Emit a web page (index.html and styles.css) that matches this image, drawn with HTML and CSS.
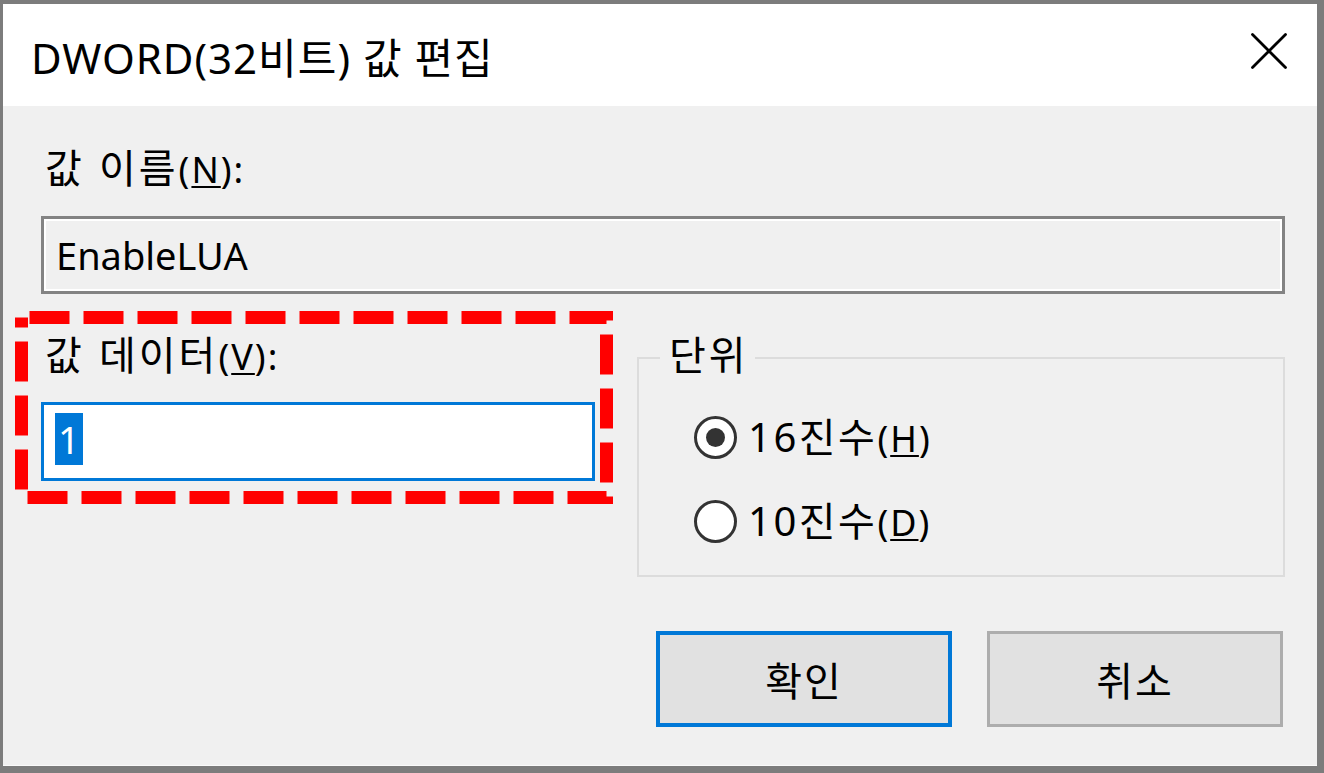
FILE: index.html
```html
<!DOCTYPE html>
<html lang="ko">
<head>
  <meta charset="UTF-8">
  <meta name="viewport" content="width=device-width, initial-scale=1.0">
  <title>DWORD(32비트) 값 편집</title>
  <link rel="stylesheet" href="styles.css">
</head>
<body>
  <div class="dialog">
    <header class="title-bar">
      <h1 class="title">DWORD(32비트) 값 편집</h1>
      <button class="close-button" aria-label="닫기">
        <svg width="36" height="36" viewBox="0 0 36 36">
          <path d="M1.5 1.5 L34.5 34.5 M34.5 1.5 L1.5 34.5" stroke="#000" stroke-width="2.8" fill="none" stroke-linecap="round"/>
        </svg>
      </button>
    </header>

    <main class="dialog-body">
      <label class="field-label" for="valueName">값 이름<span class="key">(<u>N</u>):</span></label>
      <div class="text-box text-box-readonly" id="valueName">EnableLUA</div>

      <div class="value-row">
        <div class="value-data">
          <!-- 강조 표시용 빨간 점선 박스 -->
          <svg class="highlight-box" width="598" height="193" viewBox="0 0 598 193">
            <rect x="6.5" y="6.5" width="585" height="180" fill="none" stroke="#ff0000" stroke-width="13" stroke-dasharray="40 14" stroke-dashoffset="-8"/>
          </svg>
          <label class="field-label" for="valueData">값 데이터<span class="key">(<u>V</u>):</span></label>
          <div class="text-box text-box-focus" id="valueData"><span class="selection">1</span></div>
        </div>

        <fieldset class="base-group">
          <legend class="group-title">단위</legend>
          <div class="radio-list">
            <div class="radio-row">
              <span class="radio radio-checked"></span>
              <span class="radio-label">16진수<span class="key">(<u>H</u>)</span></span>
            </div>
            <div class="radio-row">
              <span class="radio"></span>
              <span class="radio-label">10진수<span class="key">(<u>D</u>)</span></span>
            </div>
          </div>
        </fieldset>
      </div>

      <div class="button-row">
        <button class="button button-default">확인</button>
        <button class="button">취소</button>
      </div>
    </main>
  </div>
</body>
</html>
```

FILE: styles.css
```css
:root {
  --color-frame: #7c7c7c;
  --color-face: #f0f0f0;
  --color-white: #ffffff;
  --color-accent: #0078d7;
  --color-button: #e1e1e1;
  --color-button-border: #adadad;
  --color-text: #000000;
}
* {
  margin: 0;
  padding: 0;
  box-sizing: border-box;
}
body {
  width: 1324px;
  height: 773px;
  background-color: var(--color-frame);
  padding: 4px 7px 7px 3px;
  font-family: "Noto Sans", "Noto Sans CJK KR", sans-serif;
  color: var(--color-text);
  overflow: hidden;
}
.dialog {
  width: 100%;
  height: 100%;
  background-color: var(--color-face);
  border-bottom: 1px solid #fafafa;
  display: flex;
  flex-direction: column;
}
.title-bar {
  height: 102px;
  flex-shrink: 0;
  background-color: var(--color-white);
  display: flex;
  justify-content: space-between;
  align-items: center;
  padding: 0 30px 0 28px;
}
.title {
  font-size: 42px;
  font-weight: 400;
  letter-spacing: 1px;
}
.close-button {
  align-self: flex-start;
  margin-top: 29px;
  background: none;
  border: none;
  width: 36px;
  height: 36px;
}
.close-button svg {
  display: block;
}
.dialog-body {
  padding: 36px 32px 0 38px;
}
.field-label {
  display: block;
  height: 48px;
  font-family: "Noto Sans CJK KR", sans-serif;
  font-size: 40px;
  line-height: 48px;
  letter-spacing: 3px;
  padding-left: 4px;
  white-space: nowrap;
}
.key {
  font-family: "Noto Sans", sans-serif;
  font-size: 36px;
  letter-spacing: 2px;
}
.key u {
  text-underline-offset: 3px;
  text-decoration-thickness: 2px;
}
.text-box {
  height: 78px;
  display: flex;
  align-items: center;
  font-size: 38px;
}
.text-box-readonly {
  margin-top: 26px;
  border: 3px solid #838383;
  box-shadow: inset 0 0 0 2px var(--color-white);
  background-color: var(--color-face);
  padding-left: 12px;
}
.text-box-focus {
  margin-top: 25px;
  height: 79px;
  border: 3px solid var(--color-accent);
  background-color: var(--color-white);
  padding-left: 11px;
}
.selection {
  background-color: var(--color-accent);
  color: var(--color-white);
  padding: 0 3px;
  line-height: 52px;
  margin-top: -6px;
}
.value-row {
  display: grid;
  grid-template-columns: 554px 1fr;
  column-gap: 42px;
  margin-top: 35px;
}
.value-data {
  position: relative;
  align-self: start;
}
.highlight-box {
  position: absolute;
  left: -26px;
  top: -18px;
  pointer-events: none;
}
.base-group {
  border: 2px solid #dcdcdc;
  padding: 0 0 30px 21px;
  min-width: 0;
}
.group-title {
  font-family: "Noto Sans CJK KR", sans-serif;
  font-size: 40px;
  line-height: 48px;
  letter-spacing: 3px;
  padding: 0 6px 10px 9px;
}
.radio-list {
  display: flex;
  flex-direction: column;
  gap: 36px;
  margin-top: 26px;
  padding-left: 34px;
}
.radio-row {
  display: flex;
  align-items: center;
  height: 48px;
  gap: 11px;
}
.radio {
  flex-shrink: 0;
  width: 43px;
  height: 43px;
  border: 3px solid #333333;
  border-radius: 50%;
  background-color: var(--color-white);
  display: flex;
  justify-content: center;
  align-items: center;
}
.radio-checked::after {
  content: "";
  width: 19px;
  height: 19px;
  border-radius: 50%;
  background-color: #333333;
}
.radio-label {
  font-size: 40px;
  line-height: 48px;
  height: 48px;
  letter-spacing: 2.5px;
  white-space: nowrap;
}
.button-row {
  display: flex;
  justify-content: flex-end;
  gap: 35px;
  margin-top: 54px;
  padding-right: 2px;
}
.button {
  width: 296px;
  height: 96px;
  background-color: var(--color-button);
  border: 3px solid var(--color-button-border);
  font-family: "Noto Sans CJK KR", sans-serif;
  font-size: 40px;
  letter-spacing: 2px;
  color: var(--color-text);
}
.button-default {
  border: 4px solid var(--color-accent);
}
```
